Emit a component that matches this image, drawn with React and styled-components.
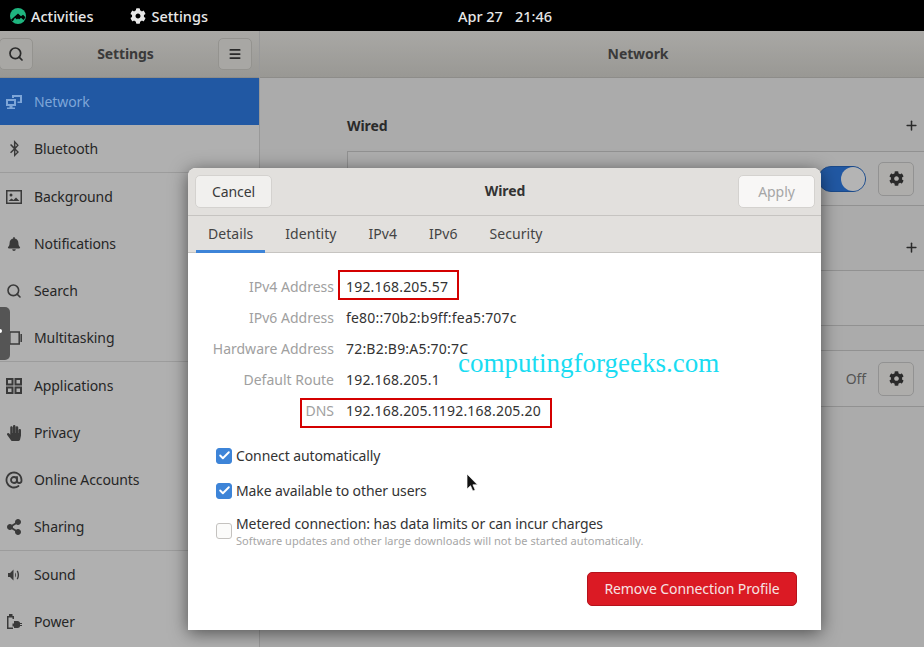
import React from 'react';
import styled, { createGlobalStyle } from 'styled-components';
import { FaBluetoothB, FaBell, FaHandPaper, FaShareAlt, FaCog } from 'react-icons/fa';
import { Search, AtSign, Plus, Menu, Check } from 'lucide-react';

const GlobalStyle = createGlobalStyle`
  html, body {
    margin: 0;
    padding: 0;
    width: 924px;
    height: 647px;
    overflow: hidden;
    background: #ababab;
  }
  * { box-sizing: border-box; }
  body {
    font-family: "Noto Sans", "Open Sans", sans-serif;
    font-size: 14px;
    letter-spacing: -0.1px;
    color: #262626;
  }
`;

const NetworkIcon = () => (
  <svg width="17" height="16" viewBox="0 0 17 16" fill="currentColor">
    <path d="M0 5h10v7H6.500v1.500H9V15H1v-1.500h2.500V12H0zM2 7v3h6V7z" fillRule="evenodd" />
    <path d="M6 1h10v8h-4.500V7.500H14V3H8v1H6z" />
  </svg>
);

const ImageIcon = () => (
  <svg width="16" height="14" viewBox="0 0 16 14" fill="currentColor">
    <path d="M0 0h16v14H0zM1.500 1.500v11h13v-11z" fillRule="evenodd" />
    <circle cx="5" cy="5" r="1.500" />
    <path d="M2.500 11l3-2.500 2 1.500 2.500-2.500 3.500 3.500z" />
  </svg>
);

const MultitaskIcon = () => (
  <svg width="15" height="14" viewBox="0 0 15 14" fill="none" stroke="currentColor" strokeWidth="1.500">
    <rect x="2.800" y="1" width="9.400" height="12" />
    <path d="M.8 3v8M14.200 3v8" />
  </svg>
);

const AppsIcon = () => (
  <svg width="16" height="16" viewBox="0 0 16 16" fill="none" stroke="currentColor" strokeWidth="2">
    <rect x="1" y="1" width="5.500" height="5.500" />
    <rect x="9.500" y="1" width="5.500" height="5.500" />
    <rect x="1" y="9.500" width="5.500" height="5.500" />
    <rect x="9.500" y="9.500" width="5.500" height="5.500" />
  </svg>
);

const SoundIcon = () => (
  <svg width="13" height="12" viewBox="0 0 13 12" fill="currentColor">
    <path d="M0 4h2l3.500-3.500v11L2 8H0z" />
    <path d="M7 3.500c1.200.8 1.200 4.200 0 5zM9.500 1.500c2 1.800 2 7.200 0 9l-.8-.8c1.300-1.800 1.300-5.600 0-7.400z" />
  </svg>
);

const PowerIcon = () => (
  <svg width="16" height="16" viewBox="0 0 16 16" fill="currentColor">
    <path d="M1 2h2V0h3.500v2H8v3H6.500V3.500h-4v10H7V15H1z" />
    <path d="M8 7h3.500c1.500 0 2.500 1 2.500 2h2v1h-2v1h2v1h-2c0 1-1 2-2.500 2H8v-1.500H6.500v-3H8z" />
  </svg>
);

const Logo = () => (
  <svg width="16" height="16" viewBox="0 0 16 16">
    <circle cx="8" cy="8" r="8" fill="#1fb57f" />
    <path d="M1 11.800L8 5.500l3 2.800L13 6.800l2.300 2.200c-.4 1.200-1 2.200-1.800 3L11 9.800l-3 2.600-3-2.600-2.300 3.700z" fill="#000" />
    <path d="M4.500 13.800L8 10.600l3.300 3A8 8 0 0 1 4.500 13.800z" fill="#1fb57f" />
  </svg>
);

const Cursor = () => (
  <svg width="13" height="20" viewBox="0 0 13 20">
    <path d="M1 1v15l3.500-3.300 2.300 5.300 2.400-1-2.300-5.200H11.500z" fill="#111" stroke="#fff" strokeWidth=".7" />
  </svg>
);

const navGroups = [
  [
    { title: 'Network', icon: <NetworkIcon />, active: true },
    { title: 'Bluetooth', icon: <FaBluetoothB size={17} /> },
  ],
  [
    { title: 'Background', icon: <ImageIcon /> },
    { title: 'Notifications', icon: <FaBell size={14} /> },
    { title: 'Search', icon: <Search size={16} strokeWidth={2.4} /> },
    { title: 'Multitasking', icon: <MultitaskIcon /> },
  ],
  [
    { title: 'Applications', icon: <AppsIcon /> },
    { title: 'Privacy', icon: <FaHandPaper size={16} /> },
    { title: 'Online Accounts', icon: <AtSign size={18} strokeWidth={2.4} /> },
    { title: 'Sharing', icon: <FaShareAlt size={16} /> },
  ],
  [
    { title: 'Sound', icon: <SoundIcon /> },
    { title: 'Power', icon: <PowerIcon /> },
  ],
];

const details = [
  { label: 'IPv4 Address', value: '192.168.205.57' },
  { label: 'IPv6 Address', value: 'fe80::70b2:b9ff:fea5:707c' },
  { label: 'Hardware Address', value: '72:B2:B9:A5:70:7C' },
  { label: 'Default Route', value: '192.168.205.1' },
  { label: 'DNS', value: '192.168.205.1 192.168.205.20' },
];

const tabs = ['Details', 'Identity', 'IPv4', 'IPv6', 'Security'];

const App = () => (
  <>
    <GlobalStyle />
    <Desktop>
      <TopBar>
        <TopItem>
          <Logo />
          Activities
        </TopItem>
        <TopItem $left={37}>
          <FaCog size={16} />
          Settings
        </TopItem>
        <Clock>
          <span>Apr 27</span>
          <span>21:46</span>
        </Clock>
      </TopBar>

      <Window>
        <Sidebar>
          <SidebarHeader>
            <HeaderButton $width={34} $left={-1}>
              <Search size={16} strokeWidth={2.6} />
            </HeaderButton>
            <SidebarTitle>Settings</SidebarTitle>
            <HeaderButton $width={34}>
              <Menu size={14} strokeWidth={3} />
            </HeaderButton>
          </SidebarHeader>
          {navGroups.map(group => (
            <NavGroup key={group[0].title}>
              {group.map(item => (
                <NavRow key={item.title} $active={item.active}>
                  <NavIcon $active={item.active}>{item.icon}</NavIcon>
                  {item.title}
                </NavRow>
              ))}
            </NavGroup>
          ))}
        </Sidebar>

        <Main>
          <MainHeader>Network</MainHeader>
          <Section>
            <SectionTitle $height={73} $top={38}>
              Wired
              <Plus size={15} strokeWidth={2.4} />
            </SectionTitle>
            <Card $height={55}>
              <Toggle />
              <GearButton>
                <FaCog size={15} />
              </GearButton>
            </Card>
            <SectionTitle $height={64} $top={32} $empty>
              <Plus size={15} strokeWidth={2.4} />
            </SectionTitle>
            <Card $height={56} />
            <Spacer />
            <Card $height={57}>
              <OffLabel>Off</OffLabel>
              <GearButton>
                <FaCog size={15} />
              </GearButton>
            </Card>
          </Section>
        </Main>
      </Window>

      <DockHandle />

      <Dialog>
        <DialogHeader>
          <DialogButton>Cancel</DialogButton>
          <DialogTitle>Wired</DialogTitle>
          <DialogButton $disabled>Apply</DialogButton>
        </DialogHeader>
        <TabBar>
          {tabs.map((tab, index) => (
            <Tab key={tab} $active={index === 0}>
              {tab}
            </Tab>
          ))}
        </TabBar>
        <DialogBody>
          <DetailList>
            {details.map(row => (
              <DetailRow key={row.label}>
                <DetailLabel>{row.label}</DetailLabel>
                <DetailValue>{row.value}</DetailValue>
              </DetailRow>
            ))}
          </DetailList>
          <CheckRow $top={19}>
            <CheckBox $checked>
              <Check size={13} strokeWidth={3.5} color="#fff" />
            </CheckBox>
            Connect automatically
          </CheckRow>
          <CheckRow $top={14}>
            <CheckBox $checked>
              <Check size={13} strokeWidth={3.5} color="#fff" />
            </CheckBox>
            Make available to other users
          </CheckRow>
          <MeteredRow>
            <CheckBox />
            <div>
              <div>Metered connection: has data limits or can incur charges</div>
              <Hint>Software updates and other large downloads will not be started automatically.</Hint>
            </div>
          </MeteredRow>
          <DialogFooter>
            <RemoveButton>Remove Connection Profile</RemoveButton>
          </DialogFooter>
        </DialogBody>
        <Callout $top={102} $left={150} $width={121} $height={30} />
        <Callout $top={230} $left={112} $width={252} $height={30} />
        <Watermark>computingforgeeks.com</Watermark>
        <CursorMark>
          <Cursor />
        </CursorMark>
      </Dialog>
    </Desktop>
  </>
);

export default App;

const Desktop = styled.div`
  position: relative;
  display: flex;
  flex-direction: column;
  width: 924px;
  height: 647px;
  overflow: hidden;
`;

const TopBar = styled.div`
  display: flex;
  align-items: center;
  flex: 0 0 31px;
  padding-left: 10px;
  background: #000;
  color: #e8e8e8;
  font-size: 14.5px;
  font-weight: 500;
  letter-spacing: 0;
`;

const TopItem = styled.div`
  display: flex;
  align-items: center;
  gap: 5px;
  margin-left: ${({ $left }) => $left || 0}px;
`;

const Clock = styled.div`
  display: flex;
  gap: 12px;
  margin-left: 250px;
`;

const Window = styled.div`
  display: flex;
  flex: 1;
  min-height: 0;
`;

const Sidebar = styled.div`
  flex: 0 0 260px;
  background: #b0b0b0;
  border-right: 1px solid #999;
`;

const SidebarHeader = styled.div`
  display: flex;
  align-items: center;
  justify-content: space-between;
  height: 47px;
  padding-right: 7px;
  border-bottom: 1px solid #8d8c89;
  background: linear-gradient(#a9a8a5, #999894);
`;

const SidebarTitle = styled.div`
  padding-bottom: 2px;
  font-weight: 700;
  color: #3a3a3a;
`;

const HeaderButton = styled.div`
  display: flex;
  align-items: center;
  justify-content: center;
  width: ${({ $width }) => $width}px;
  height: 32px;
  margin-left: ${({ $left }) => $left || 0}px;
  border: 1px solid #94938f;
  border-radius: 5px;
  background: #a8a7a4;
  color: #2a2a2a;
`;

const NavGroup = styled.div`
  border-bottom: 1px solid #9c9c9c;

  &:last-child {
    border-bottom: 0;
  }
`;

const NavRow = styled.div`
  display: flex;
  align-items: center;
  height: 47px;
  color: ${({ $active }) => ($active ? '#7ea6d8' : '#262626')};
  background: ${({ $active }) => ($active ? '#2158a3' : 'transparent')};
`;

const NavIcon = styled.div`
  display: flex;
  align-items: center;
  justify-content: center;
  flex: 0 0 34px;
  padding-right: 6px;
  color: ${({ $active }) => ($active ? '#7ea6d8' : '#3a3a3a')};
`;

const Main = styled.div`
  display: flex;
  flex-direction: column;
  flex: 1;
  min-width: 0;
  background: #ababab;
`;

const MainHeader = styled.div`
  display: flex;
  align-items: center;
  justify-content: center;
  flex: 0 0 47px;
  padding: 0 0 2px 92px;
  border-bottom: 1px solid #8d8c89;
  background: linear-gradient(#a9a8a5, #999894);
  font-weight: 700;
  color: #3a3a3a;
`;

const Section = styled.div`
  display: flex;
  flex-direction: column;
  margin-left: 87px;
`;

const SectionTitle = styled.div`
  display: flex;
  align-items: flex-start;
  justify-content: ${({ $empty }) => ($empty ? 'flex-end' : 'space-between')};
  height: ${({ $height }) => $height}px;
  padding: ${({ $top }) => $top}px 5px 0 0;
  line-height: 19px;
  font-weight: 700;
  color: #2a2a2a;

  svg {
    margin-top: 2px;
  }
`;

const Card = styled.div`
  display: flex;
  align-items: center;
  justify-content: flex-end;
  gap: 12px;
  height: ${({ $height }) => $height}px;
  margin-right: -3px;
  padding-right: 12px;
  border: 1px solid #919191;
  background: #adadad;
`;

const Spacer = styled.div`
  height: 24px;
`;

const Toggle = styled.div`
  position: relative;
  width: 48px;
  height: 26px;
  border: 1px solid #1b4a8a;
  border-radius: 13px;
  background: #2158a3;

  &::after {
    content: '';
    position: absolute;
    top: 0;
    right: 0;
    width: 24px;
    height: 24px;
    border-radius: 50%;
    background: #b4b4b4;
  }
`;

const GearButton = styled.div`
  display: flex;
  align-items: center;
  justify-content: center;
  width: 36px;
  height: 34px;
  border: 1px solid #929292;
  border-radius: 5px;
  background: #aeadab;
  color: #2a2a2a;
`;

const OffLabel = styled.div`
  color: #555;
`;

const DockHandle = styled.div`
  position: absolute;
  top: 307px;
  left: 0;
  width: 10px;
  height: 53px;
  border-radius: 0 5px 5px 0;
  background: #555;

  &::after {
    content: '';
    position: absolute;
    top: 22px;
    left: -2px;
    width: 4px;
    height: 4px;
    border-radius: 50%;
    background: #fff;
  }
`;

const Dialog = styled.div`
  position: absolute;
  top: 168px;
  left: 188px;
  display: flex;
  flex-direction: column;
  width: 633px;
  height: 462px;
  border-radius: 8px 8px 0 0;
  background: #fff;
  box-shadow: 0 3px 18px rgba(0, 0, 0, 0.55);
`;

const DialogHeader = styled.div`
  display: flex;
  align-items: center;
  justify-content: space-between;
  flex: 0 0 48px;
  padding: 0 6px 0 7px;
  border-bottom: 1px solid #c6c4c1;
  border-radius: 8px 8px 0 0;
  background: #e2e0dd;
`;

const DialogTitle = styled.div`
  padding-bottom: 2px;
  font-weight: 700;
  color: #333;
`;

const DialogButton = styled.div`
  display: flex;
  align-items: center;
  justify-content: center;
  width: 77px;
  height: 33px;
  border: 1px solid #d4d2cf;
  border-radius: 5px;
  background: ${({ $disabled }) => ($disabled ? '#f8f7f6' : '#f1f0ee')};
  color: ${({ $disabled }) => ($disabled ? '#a6a6a6' : '#3a3a3a')};
`;

const TabBar = styled.div`
  display: flex;
  gap: 8px;
  flex: 0 0 37px;
  padding-left: 8px;
  border-bottom: 1px solid #c6c4c1;
  background: #e2e0dd;
`;

const Tab = styled.div`
  display: flex;
  align-items: center;
  padding: 0 12px;
  border-bottom: 3px solid ${({ $active }) => ($active ? '#3d84d8' : 'transparent')};
  margin-bottom: -1px;
  letter-spacing: 0.05px;
  color: #444;
`;

const DialogBody = styled.div`
  display: flex;
  flex-direction: column;
  flex: 1;
  padding: 18px 24px 24px 28px;
`;

const DetailList = styled.div`
  display: flex;
  flex-direction: column;
`;

const DetailRow = styled.div`
  display: flex;
  align-items: center;
  gap: 12px;
  height: 31px;
`;

const DetailLabel = styled.div`
  width: 118px;
  white-space: nowrap;
  display: flex;
  justify-content: flex-end;
  letter-spacing: 0;
  color: #a0a0a0;
`;

const DetailValue = styled.div`
  letter-spacing: 0.2px;
  word-spacing: -5px;
  color: #333;
`;

const CheckRow = styled.div`
  display: flex;
  align-items: center;
  gap: 4px;
  height: 21px;
  margin-top: ${({ $top }) => $top}px;
  color: #333;
`;

const CheckBox = styled.div`
  display: flex;
  align-items: center;
  justify-content: center;
  flex: 0 0 16px;
  height: 16px;
  border: 1px solid ${({ $checked }) => ($checked ? '#3d84d8' : '#c4c2bf')};
  border-radius: 3px;
  background: ${({ $checked }) => ($checked ? '#3d84d8' : '#fbfbfa')};
`;

const MeteredRow = styled.div`
  display: flex;
  align-items: center;
  gap: 4px;
  margin-top: 13px;
  line-height: 19px;
  color: #333;
`;

const Hint = styled.div`
  font-size: 11px;
  line-height: 15px;
  letter-spacing: 0.05px;
  color: #a6a6a6;
`;

const DialogFooter = styled.div`
  display: flex;
  justify-content: flex-end;
  margin-top: auto;
`;

const RemoveButton = styled.div`
  display: flex;
  align-items: center;
  justify-content: center;
  width: 210px;
  height: 34px;
  padding-bottom: 2px;
  border: 1px solid #b5121b;
  border-radius: 5px;
  background: #db1a24;
  color: #f6e3e3;
`;

const Callout = styled.div`
  position: absolute;
  top: ${({ $top }) => $top}px;
  left: ${({ $left }) => $left}px;
  width: ${({ $width }) => $width}px;
  height: ${({ $height }) => $height}px;
  border: 2px solid #d40000;
`;

const Watermark = styled.div`
  position: absolute;
  top: 180px;
  left: 270px;
  font-family: "Liberation Serif", serif;
  font-size: 27px;
  letter-spacing: 0;
  color: #19dcf2;
  white-space: nowrap;
`;

const CursorMark = styled.div`
  position: absolute;
  top: 305px;
  left: 278px;
  line-height: 0;
`;
